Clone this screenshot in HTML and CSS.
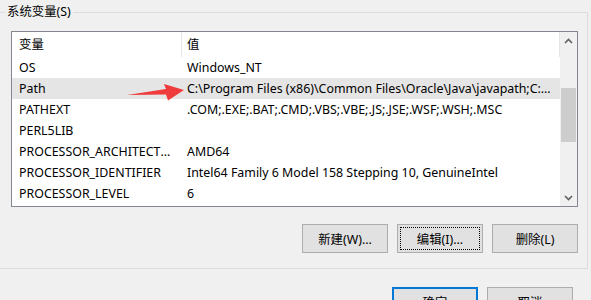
FILE: index.html
```html
<!DOCTYPE html>
<html lang="zh-CN">
<head>
<meta charset="utf-8">
<title>系统变量</title>
<link rel="stylesheet" href="styles.css">
</head>
<body>
<div class="group">
  <span class="legend">系统变量(S)</span>
  <div class="listbox">
    <div class="listview">
      <div class="hdr"><div class="c1">变量</div><div class="c2">值</div></div>
      <div class="row"><div class="c1">OS</div><div class="c2">Windows_NT</div></div>
      <div class="row sel"><div class="c1">Path</div><div class="c2">C:\Program Files (x86)\Common Files\Oracle\Java\javapath;C:\WINDOWS\system32;C:\WINDOWS</div></div>
      <div class="row"><div class="c1">PATHEXT</div><div class="c2">.COM;.EXE;.BAT;.CMD;.VBS;.VBE;.JS;.JSE;.WSF;.WSH;.MSC</div></div>
      <div class="row"><div class="c1">PERL5LIB</div><div class="c2"></div></div>
      <div class="row"><div class="c1">PROCESSOR_ARCHITECTURE</div><div class="c2">AMD64</div></div>
      <div class="row"><div class="c1">PROCESSOR_IDENTIFIER</div><div class="c2">Intel64 Family 6 Model 158 Stepping 10, GenuineIntel</div></div>
      <div class="row"><div class="c1">PROCESSOR_LEVEL</div><div class="c2">6</div></div>
    </div>
    <div class="scrollbar">
      <div class="sb-btn">
        <svg width="9" height="6" viewBox="0 0 9 6"><polyline points="1,5 4.5,1.5 8,5" fill="none" stroke="#606060" stroke-width="1.6"/></svg>
      </div>
      <div class="sb-track"><div class="sb-thumb"></div></div>
      <div class="sb-btn">
        <svg width="9" height="6" viewBox="0 0 9 6"><polyline points="1,1 4.5,4.5 8,1" fill="none" stroke="#606060" stroke-width="1.6"/></svg>
      </div>
    </div>
  </div>
  <div class="btns">
    <button class="btn">新建(W)...</button>
    <button class="btn focus">编辑(I)...</button>
    <button class="btn">删除(L)</button>
  </div>
</div>
<div class="dlg-btns">
  <button class="btn default">确定</button>
  <button class="btn">取消</button>
</div>
<svg class="annot-arrow" width="70" height="26" viewBox="120 80 70 26">
  <polygon points="127,95 166,89 164,84 184,90 168,100.5 166,94.5" fill="#ef3b3b"/>
</svg>
</body>
</html>
```
FILE: styles.css
```css
* { box-sizing: border-box; }
html, body { margin: 0; padding: 0; }
body {
  width: 591px;
  height: 300px;
  overflow: hidden;
  background: #f0f0f0;
  font-family: "Noto Sans", "Noto Sans CJK SC", sans-serif;
  font-size: 12.4px;
  color: #000;
  position: relative;
}
.group {
  position: relative;
  width: 588px;
  height: 257px;
  margin-top: 12px;
  border: 1px solid #dcdcdc;
  border-left: none;
  padding: 18px 9px 0 11px;
}
.legend {
  position: absolute;
  left: 5px;
  top: -10px;
  padding: 0 2px;
  background: #f0f0f0;
  line-height: 17px;
}
.listbox {
  display: flex;
  height: 176px;
  border: 1px solid #828790;
  background: #fff;
}
.listview {
  flex: 1;
  min-width: 0;
}
.hdr, .row {
  display: flex;
  align-items: center;
}
.hdr { height: 25px; }
.row { height: 21px; }
.row.sel { background: #e5e5e5; }
.c1 {
  width: 170px;
  flex: none;
  padding-left: 7px;
  padding-right: 6px;
  white-space: nowrap;
  overflow: hidden;
  text-overflow: ellipsis;
}
.c2 {
  flex: 1;
  min-width: 0;
  padding-left: 5px;
  padding-right: 5px;
  white-space: nowrap;
  overflow: hidden;
  text-overflow: ellipsis;
}
.hdr .c1, .hdr .c2 {
  height: 25px;
  line-height: 25px;
  border-right: 1px solid #e5e5e5;
}
.scrollbar {
  width: 17px;
  flex: none;
  display: flex;
  flex-direction: column;
  background: #f0f0f0;
}
.sb-btn {
  height: 17px;
  display: flex;
  align-items: center;
  justify-content: center;
}
.sb-track { flex: 1; }
.sb-thumb {
  margin: 39px 1px 0;
  height: 54px;
  background: #cdcdcd;
}
.btns {
  display: flex;
  justify-content: flex-end;
  gap: 9px;
  margin-top: 17px;
}
.btn {
  width: 86px;
  height: 29px;
  border: 1px solid #adadad;
  background: #e1e1e1;
  font-family: "Noto Sans", "Noto Sans CJK SC", sans-serif;
  font-size: 12.4px;
  color: #000;
  padding: 0;
}
.btn.focus {
  outline: 1px dotted #000;
  outline-offset: -4px;
}
.btn.default {
  border: 2px solid #0078d7;
}
.dlg-btns {
  display: flex;
  justify-content: flex-end;
  gap: 9px;
  margin-top: 18px;
  padding-right: 18px;
}
.annot-arrow {
  position: absolute;
  left: 120px;
  top: 80px;
  pointer-events: none;
}
```
